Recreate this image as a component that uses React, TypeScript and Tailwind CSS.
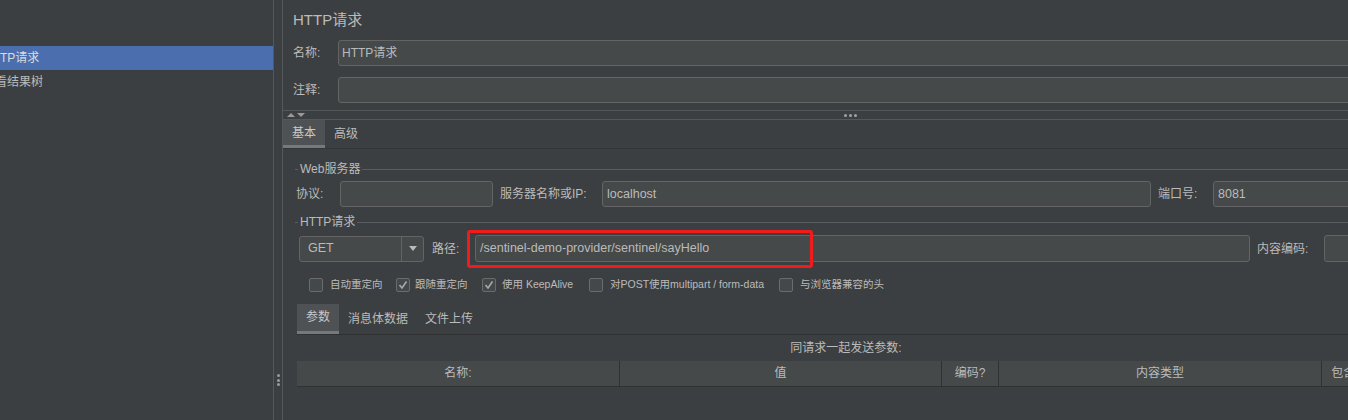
import React from "react";

const FONT = "font-[family-name:'Liberation_Sans','Noto_Sans_CJK_SC',sans-serif]";

function Field({ value, className }: { value?: string; className: string }) {
  return (
    <div
      className={
        "h-[26px] bg-[#45494a] border border-[#646464] rounded-[3px] flex items-center px-[4px] text-[12.5px] text-[#bbbbbb] whitespace-nowrap overflow-hidden " +
        className
      }
    >
      {value}
    </div>
  );
}

function Check({ checked, label, className }: { checked?: boolean; label: string; className: string }) {
  return (
    <div className={"flex items-center gap-[7px] shrink-0 " + className}>
      <div className="w-[14px] h-[14px] rounded-[2px] border border-[#6b6b6b] bg-[#43494a] flex items-center justify-center">
        {checked && (
          <svg width="12" height="12" viewBox="0 0 12 12">
            <polyline points="2.5,6 5,9 9.5,2.5" fill="none" stroke="#a9a9a9" strokeWidth="1.6" />
          </svg>
        )}
      </div>
      <span className="text-[10.5px] text-[#bbbbbb] whitespace-nowrap">{label}</span>
    </div>
  );
}

function GroupTitle({ title }: { title: string }) {
  return (
    <div className="flex items-center h-[16px]">
      <div className="w-[3px] h-px bg-[#5a5d5f]" />
      <span className="ml-[2px] text-[12px] text-[#bbbbbb] whitespace-nowrap">{title}</span>
      <div className="ml-[2px] flex-1 h-px bg-[#5a5d5f]" />
    </div>
  );
}

export default function App() {
  return (
    <div className={"flex w-[1348px] h-[420px] overflow-hidden bg-[#3c3f41] text-[#bbbbbb] " + FONT}>
      {/* Left tree */}
      <div className="w-[274px] shrink-0 border-r border-[#555759] overflow-hidden pt-[46px]">
        <div className="h-[24px] bg-[#4b6eaf] flex items-center text-[12px] text-[#dcdcdc] whitespace-nowrap">
          <span className="-ml-[16px]">HTTP请求</span>
        </div>
        <div className="h-[24px] flex items-center text-[12px] text-[#bbbbbb] whitespace-nowrap">
          <span className="-ml-[17px]">察看结果树</span>
        </div>
      </div>

      {/* Vertical splitter */}
      <div className="w-[9px] shrink-0 border-r border-[#555759] flex flex-col justify-end items-center pb-[34px]">
        <div className="flex flex-col gap-[1.5px]">
          <div className="w-[3px] h-[3px] rounded-full bg-[#9a9a9a]" />
          <div className="w-[3px] h-[3px] rounded-full bg-[#9a9a9a]" />
          <div className="w-[3px] h-[3px] rounded-full bg-[#9a9a9a]" />
        </div>
      </div>

      {/* Main */}
      <div className="w-[1120px] shrink-0 flex flex-col">
        <div className="h-[40px] flex items-center pl-[10px] text-[15px] text-[#bbbbbb]">HTTP请求</div>

        <div className="flex items-center pl-[10px]">
          <span className="w-[45px] text-[12px]">名称:</span>
          <Field value="HTTP请求" className="flex-1 !text-[12px] !px-[3px]" />
        </div>
        <div className="flex items-center pl-[10px] mt-[11px]">
          <span className="w-[45px] text-[12px]">注释:</span>
          <Field className="flex-1" />
        </div>

        {/* Horizontal splitter */}
        <div className="mt-[7px] h-[10px] border-y border-[#555759] relative flex items-center pl-[4px]">
          <div className="flex items-center gap-[2px]">
            <div className="w-0 h-0 border-l-[4px] border-r-[4px] border-b-[4px] border-l-transparent border-r-transparent border-b-[#9a9a9a]" />
            <div className="w-0 h-0 border-l-[4px] border-r-[4px] border-t-[4px] border-l-transparent border-r-transparent border-t-[#9a9a9a]" />
          </div>
          <div className="absolute left-[561px] top-[2.5px] flex gap-[2px]">
            <div className="w-[3px] h-[3px] rounded-full bg-[#a0a0a0]" />
            <div className="w-[3px] h-[3px] rounded-full bg-[#a0a0a0]" />
            <div className="w-[3px] h-[3px] rounded-full bg-[#a0a0a0]" />
          </div>
        </div>

        {/* Tabs */}
        <div className="flex border-b border-[#333537]">
          <div className="h-[28px] px-[9px] bg-[#4e5254] border-b-[3px] border-[#76797c] flex items-center text-[12px] text-[#c8c8c8]">基本</div>
          <div className="h-[28px] px-[9px] flex items-center text-[12px]">高级</div>
        </div>

        <div className="pl-[12px] pr-[8px]">
          <div className="mt-[12px]">
            <GroupTitle title="Web服务器" />
          </div>
          <div className="mt-[4px] flex items-center">
            <span className="w-[45px] pl-[1px] text-[12px]">协议:</span>
            <Field className="w-[153px]" />
            <span className="ml-[7px] w-[102px] text-[12px] whitespace-nowrap">服务器名称或IP:</span>
            <Field value="localhost" className="w-[549px]" />
            <span className="ml-[7px] w-[55px] text-[12px] whitespace-nowrap">端口号:</span>
            <Field value="8081" className="flex-1" />
          </div>

          <div className="mt-[7px]">
            <GroupTitle title="HTTP请求" />
          </div>
          <div className="mt-[5px] flex items-center relative">
            <div className="ml-[4px] w-[125px] h-[26px] bg-[#45494a] border border-[#646464] rounded-[3px] flex items-center">
              <span className="flex-1 pl-[8px] text-[12.5px]">GET</span>
              <div className="w-[22px] h-full border-l border-[#646464] flex items-center justify-center">
                <div className="w-0 h-0 border-l-[4px] border-r-[4px] border-t-[5px] border-l-transparent border-r-transparent border-t-[#bbbbbb]" />
              </div>
            </div>
            <span className="ml-[8px] w-[43px] text-[12px]">路径:</span>
            <Field value="/sentinel-demo-provider/sentinel/sayHello" className="w-[775px] !h-[27px]" />
            <span className="ml-[7px] w-[67px] text-[12px] whitespace-nowrap">内容编码:</span>
            <Field className="flex-1 !h-[27px]" />
            <div className="absolute left-[172px] -top-[5px] w-[346px] h-[38px] border-[3px] border-[#f01c1c] rounded-[3px] pointer-events-none" />
          </div>

          <div className="mt-[15px] flex items-center pl-[14px]">
            <Check label="自动重定向" className="w-[87px]" />
            <Check checked label="跟随重定向" className="w-[86px] !gap-[5px]" />
            <Check checked label="使用 KeepAlive" className="w-[107px] !gap-[6px]" />
            <Check label="对POST使用multipart / form-data" className="w-[190px]" />
            <Check label="与浏览器兼容的头" className="w-[190px]" />
          </div>

          {/* Sub tabs */}
          <div className="mt-[11px] ml-[2px]">
            <div className="flex border-b border-[#2f3133]">
              <div className="h-[30px] px-[9px] bg-[#4e5254] border-b-[3px] border-[#76797c] flex items-center text-[12px] text-[#c8c8c8]">参数</div>
              <div className="h-[30px] px-[9px] flex items-center text-[12px]">消息体数据</div>
              <div className="h-[30px] px-[8px] flex items-center text-[12px]">文件上传</div>
            </div>
            <div className="h-[26px] flex items-center justify-center text-[12px]">同请求一起发送参数:</div>
            <div className="flex h-[26px] bg-[#45494a] border-b border-[#2f3133] text-[12px] whitespace-nowrap">
              <div className="w-[323px] shrink-0 border-r border-[#2f3133] flex items-center justify-center">名称:</div>
              <div className="w-[322px] shrink-0 border-r border-[#2f3133] flex items-center justify-center">值</div>
              <div className="w-[57px] shrink-0 border-r border-[#2f3133] flex items-center justify-center">编码?</div>
              <div className="w-[323px] shrink-0 border-r border-[#2f3133] flex items-center justify-center">内容类型</div>
              <div className="flex-1 flex items-center justify-center">包含等于?</div>
            </div>
          </div>
        </div>
      </div>
    </div>
  );
}
